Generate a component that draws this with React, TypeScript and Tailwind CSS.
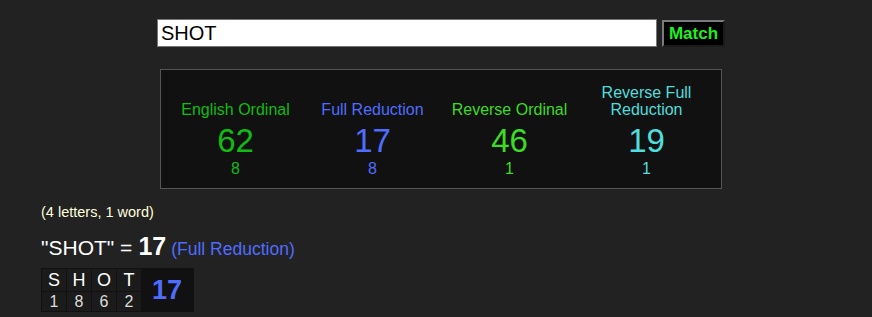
import { useState } from 'react';

const ciphers = [
    { name: 'English Ordinal', value: 62, reduced: 8, color: 'text-[#12bb12]' },
    { name: 'Full Reduction', value: 17, reduced: 8, color: 'text-[#4f6cff]' },
    { name: 'Reverse Ordinal', value: 46, reduced: 1, color: 'text-[#3ddb22]' },
    { name: 'Reverse Full Reduction', value: 19, reduced: 1, color: 'text-[#4fdcdc]', wrap: true },
];

const letters = [
    { ch: 'S', n: 1 },
    { ch: 'H', n: 8 },
    { ch: 'O', n: 6 },
    { ch: 'T', n: 2 },
];

export default function App() {
    const [phrase, setPhrase] = useState('SHOT');

    return (
        <div className="min-h-[317px] bg-[#222222] font-['Liberation_Sans',Arial,sans-serif] text-white">
            {/* search bar */}
            <div className="flex items-start pl-[157px] pt-[19px]">
                <input
                    value={phrase}
                    onChange={e => setPhrase(e.target.value)}
                    className="h-[28px] w-[500px] border border-[#767676] bg-white px-[3px] text-[20px] text-black outline-none"
                />
                <button className="ml-[5px] mt-[1px] flex h-[27px] w-[63px] items-center justify-center border-2 border-t-[#7a7a7a] border-l-[#7a7a7a] border-r-[#1a1a1a] border-b-[#1a1a1a] bg-black text-[17px] font-bold text-[#22ee22]">
                    Match
                </button>
            </div>

            {/* cipher panel */}
            <div className="ml-[160px] mt-[22px] h-[120px] w-[562px] border border-[#555] bg-[#111111] pl-[6px] pt-[14px]">
                <div className="grid grid-cols-[repeat(4,137px)]">
                    {ciphers.map(c => (
                        <div key={c.name} className={`flex flex-col items-center text-center ${c.color}`}>
                            <div className="flex h-[34px] items-end text-[16px] leading-[17px]">
                                {c.wrap ? (
                                    <span>Reverse Full<br />Reduction</span>
                                ) : (
                                    <span>{c.name}</span>
                                )}
                            </div>
                            <div className="mt-[4px] text-[33px] leading-[38px]">{c.value}</div>
                            <div className="text-[16px] leading-[17px]">{c.reduced}</div>
                        </div>
                    ))}
                </div>
            </div>

            {/* result */}
            <div className="pl-[41px]">
                <div className="mt-[15px] text-[14.5px] leading-[16px] text-[#ffffdd]">(4 letters, 1 word)</div>
                <div className="mt-[13px] flex items-baseline leading-[27px]">
                    <span className="text-[21px]">"{phrase}" = </span>
                    <span className="ml-[6px] text-[25px] font-bold">17</span>
                    <span className="ml-[5px] text-[17.5px] text-[#4f6cff]">(Full Reduction)</span>
                </div>
                <div className="mt-[5px] flex w-fit bg-[#111111] p-[1px]">
                    <div className="grid grid-cols-[repeat(4,24px)] gap-[1px]">
                        {letters.map(l => (
                            <div key={l.ch} className="flex h-[22px] items-center justify-center bg-[#1b1b1b] text-[18px]">
                                {l.ch}
                            </div>
                        ))}
                        {letters.map(l => (
                            <div key={l.ch + l.n} className="flex h-[19px] items-center justify-center bg-[#1b1b1b] text-[16px] text-[#dddddd]">
                                {l.n}
                            </div>
                        ))}
                    </div>
                    <div className="flex w-[52px] items-center justify-center text-[27px] font-bold text-[#4f6cff]">
                        17
                    </div>
                </div>
            </div>
        </div>
    );
}
